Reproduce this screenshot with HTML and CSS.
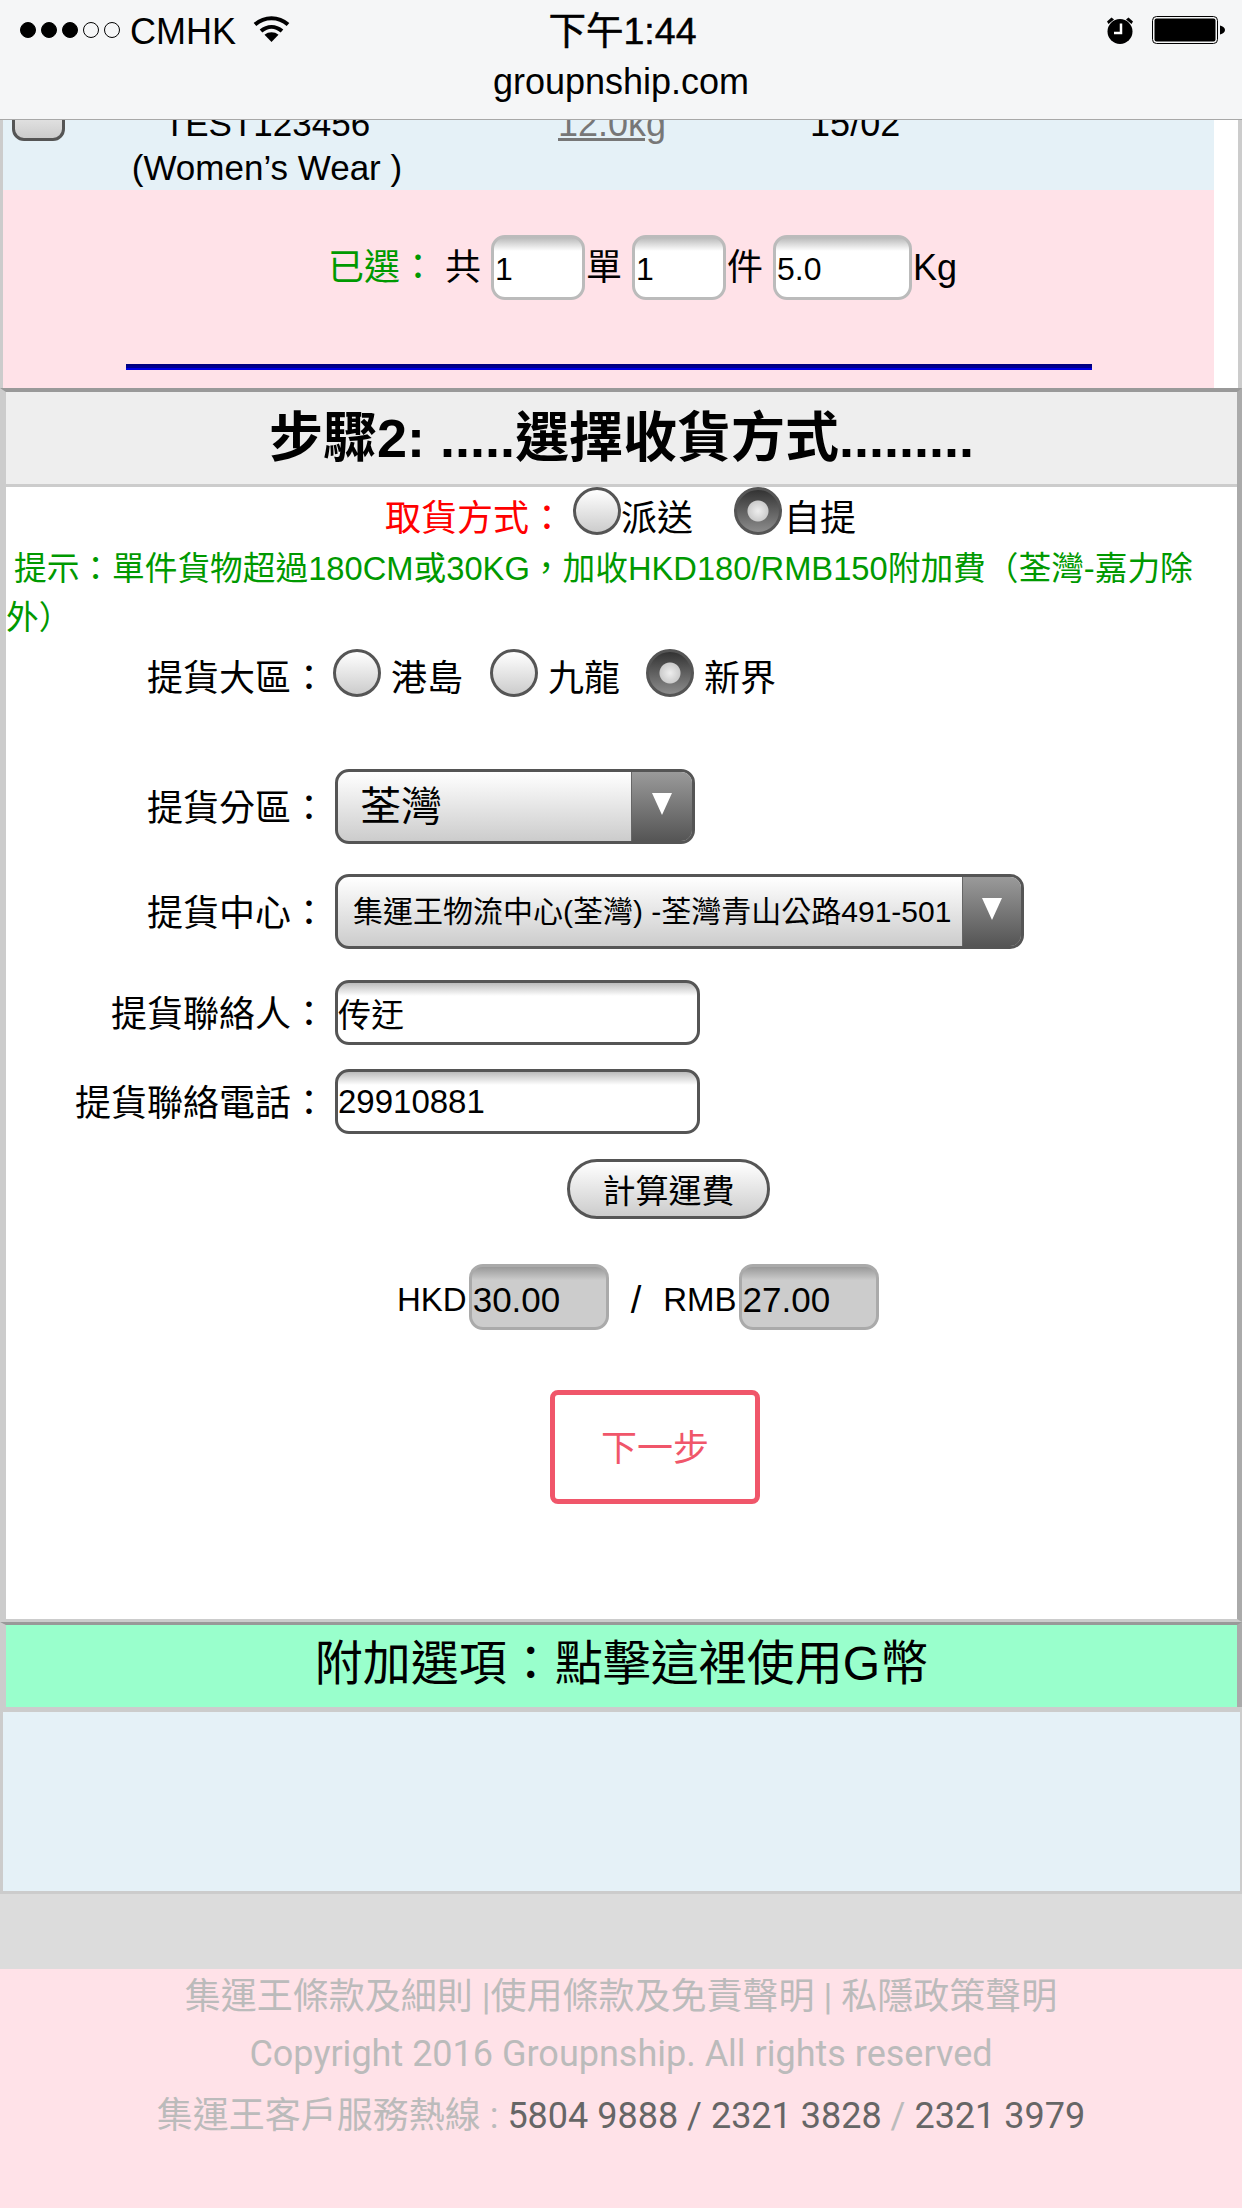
FILE: index.html
```html
<!DOCTYPE html>
<html lang="zh-Hant">
<head>
    <meta charset="UTF-8">
    <meta name="viewport" content="width=device-width, initial-scale=1.0">
    <title>groupnship.com</title>
    <link rel="stylesheet" href="styles.css">
</head>
<body>
    <header class="status-bar">
        <div class="status-row">
            <div class="status-left">
                <span class="signal">
                    <i class="dot on"></i><i class="dot on"></i><i class="dot on"></i><i class="dot"></i><i class="dot"></i>
                </span>
                <span class="carrier">CMHK</span>
                <svg class="wifi" width="37" height="27" viewBox="0 0 37 27">
                    <path d="M2 9.500C11.500 1 25.500 1 35 9.500" fill="none" stroke="#000" stroke-width="4"/>
                    <path d="M8 16C14.500 10.500 22.500 10.500 29 16" fill="none" stroke="#000" stroke-width="4"/>
                    <path d="M18.500 27L11.500 19.800C15.500 16.500 21.500 16.500 25.500 19.800Z"/>
                </svg>
            </div>
            <div class="clock">下午1:44</div>
            <div class="status-right">
                <svg class="alarm" width="28" height="28" viewBox="0 0 28 28">
                    <circle cx="14" cy="15.500" r="12.500"/>
                    <path d="M1 5.500L5.500 1.500L8 3.500L2.500 8ZM27 5.500L22.500 1.500L20 3.500L25.500 8Z"/>
                    <path d="M15 7.500V17H8" fill="none" stroke="#fff" stroke-width="2.500"/>
                </svg>
                <svg class="battery" width="73" height="28" viewBox="0 0 73 28">
                    <rect x="0.500" y="0.500" width="65" height="27" rx="4" fill="none" stroke="#000"/>
                    <rect x="2.500" y="2.500" width="61" height="23" rx="2"/>
                    <path d="M68 9.500C71 10 73 12 73 14C73 16 71 18 68 18.500Z"/>
                </svg>
            </div>
        </div>
        <div class="url">groupnship.com</div>
    </header>

    <section class="orders">
        <div class="order-row">
            <div class="col-check"><input class="checkbox" type="checkbox"></div>
            <div class="col-name">TEST123456<br>(Women’s Wear )</div>
            <a class="col-weight" href="#">12.0kg</a>
            <div class="col-date">15/02</div>
        </div>
        <div class="summary">
            <div class="summary-line">
                <span class="summary-title">已選：</span>
                <span>共</span>
                <input class="qty" type="text" value="1">
                <span>單</span>
                <input class="qty" type="text" value="1">
                <span>件</span>
                <input class="qty qty-wide" type="text" value="5.0">
                <span>Kg</span>
            </div>
            <hr class="summary-rule">
        </div>
    </section>

    <section class="step">
        <h2 class="step-title">步驟2: .....選擇收貨方式.........</h2>
        <div class="method">
            <span class="method-label">取貨方式：</span>
            <input class="radio" type="radio" name="method">
            <label class="method-text">派送</label>
            <input class="radio radio-next" type="radio" name="method" checked>
            <label class="method-text method-text-last">自提</label>
        </div>
        <p class="hint">提示：單件貨物超過180CM或30KG，加收HKD180/RMB150附加費（荃灣-嘉力除外）</p>

        <div class="field field-area">
            <label>提貨大區：</label>
            <div class="areas">
                <input class="radio" type="radio" name="area"><span>港島</span>
                <input class="radio" type="radio" name="area"><span>九龍</span>
                <input class="radio" type="radio" name="area" checked><span>新界</span>
            </div>
        </div>
        <div class="field field-district">
            <label>提貨分區：</label>
            <div class="select select-small">
                <select><option>荃灣</option></select>
                <span class="select-arrow"></span>
            </div>
        </div>
        <div class="field field-center">
            <label>提貨中心：</label>
            <div class="select select-large">
                <select><option>集運王物流中心(荃灣) -荃灣青山公路491-501</option></select>
                <span class="select-arrow"></span>
            </div>
        </div>
        <div class="field field-name">
            <label>提貨聯絡人：</label>
            <input class="text-input" type="text" value="传迂">
        </div>
        <div class="field field-phone">
            <label>提貨聯絡電話：</label>
            <input class="text-input" type="text" value="29910881">
        </div>

        <button class="calc-btn" type="button">計算運費</button>

        <div class="price">
            <span>HKD</span>
            <input class="price-box" type="text" value="30.00" readonly>
            <span class="price-slash">/</span>
            <span>RMB</span>
            <input class="price-box" type="text" value="27.00" readonly>
        </div>

        <button class="next-btn" type="button">下一步</button>
    </section>

    <div class="extra">附加選項：點擊這裡使用G幣</div>
    <div class="extra-body"></div>
    <div class="spacer"></div>

    <footer class="footer">
        <p class="footer-links">集運王條款及細則 |使用條款及免責聲明 | 私隱政策聲明</p>
        <p class="footer-copy">Copyright 2016 Groupnship. All rights reserved</p>
        <p class="footer-phone">集運王客戶服務熱線 : <b>5804 9888 / 2321 3828</b> / <b>2321 3979</b></p>
    </footer>
</body>
</html>
```

FILE: styles.css
```css
* {
    margin: 0;
    padding: 0;
    box-sizing: border-box;
}

body {
    width: 1242px;
    height: 2208px;
    overflow: hidden;
    background-color: #dcdcdc;
    color: #000;
    font-family: "Liberation Sans", "Noto Sans CJK TC", sans-serif;
    font-size: 36px;
}

input, select, button {
    font-family: inherit;
    color: #000;
    outline: none;
}

/* phone status bar + address */
.status-bar {
    position: relative;
    z-index: 2;
    height: 120px;
    padding-top: 12px;
    background-color: #f5f6f7;
    border-bottom: 1px solid #a8a8a8;
}

.status-row {
    display: grid;
    grid-template-columns: 1fr auto 1fr;
    align-items: center;
    height: 40px;
    padding: 0 17px 0 20px;
}

.status-left {
    display: flex;
    align-items: center;
}

.signal {
    display: flex;
    gap: 5px;
    margin-top: -4px;
}

.dot {
    width: 16px;
    height: 16px;
    border: 1px solid #000;
    border-radius: 50%;
}

.dot.on {
    background-color: #000;
}

.carrier {
    margin-left: 10px;
    line-height: 40px;
}

.wifi {
    margin: -8px 0 0 17px;
}

.clock {
    margin-top: -3px;
    font-size: 37.500px;
    line-height: 40px;
    -webkit-text-stroke: 0.5px #000;
}

.status-right {
    display: flex;
    align-items: center;
    justify-content: flex-end;
    margin-top: -4px;
}

.battery {
    margin-left: 18px;
}

.url {
    margin-top: 10px;
    line-height: 40px;
    text-align: center;
}

/* order list, cut by the bar */
.orders {
    padding-right: 24px;
    background-color: #fff;
    border-left: 3px solid #ccc;
    border-right: 4px solid #ccc;
}

.order-row {
    display: flex;
    height: 70px;
    overflow: hidden;
    background-color: #e5f1f7;
    line-height: 44px;
}

.col-check {
    width: 120px;
    padding-left: 9px;
}

.checkbox {
    display: block;
    appearance: none;
    width: 53px;
    height: 53px;
    margin-top: -32px;
    background: linear-gradient(#fff, #ccc);
    border: 3px solid #555;
    border-radius: 12px;
}

.col-name {
    width: 288px;
    margin-top: -18px;
    font-size: 35px;
    text-align: center;
}

.col-weight {
    height: 44px;
    margin: -18px 0 0 147px;
    color: #777;
}

.col-date {
    margin: -18px 0 0 144px;
}

.summary {
    height: 198px;
    padding-top: 45px;
    background-color: #ffe2e8;
    overflow: hidden;
}

.summary-line {
    display: flex;
    align-items: center;
    height: 65px;
    padding-left: 325px;
    line-height: 40px;
}

.summary-title {
    width: 117px;
    color: #090;
}

.qty {
    width: 94px;
    height: 65px;
    margin: 0 1px 0 10px;
    padding: 3px 1px 0;
    background: linear-gradient(#bbb, #fff 22%);
    border: 3px solid #bbb;
    border-radius: 14px;
    font-size: 32px;
}

.qty-wide {
    width: 139px;
}

.summary-rule {
    width: 966px;
    height: 6px;
    margin: 64px 0 0 123px;
    background-color: #000090;
    border: 0;
    border-top: 2px solid #000080;
    border-bottom: 2px solid #0000e0;
}

/* step 2 panel */
.step {
    height: 1234px;
    background-color: #fff;
    border-top: 4px solid #999;
    border-left: 6px solid #ccc;
    border-right: 5px solid #aaa;
    border-bottom: 3px solid #ccc;
}

.step-title {
    height: 95px;
    background-color: #eee;
    border-bottom: 3px solid #ccc;
    font-size: 54px;
    line-height: 92px;
    text-align: center;
}

.method {
    display: flex;
    justify-content: center;
    height: 48px;
    padding-right: 2px;
    line-height: 38px;
}

.method-label {
    margin-right: 8px;
    padding-top: 13px;
    color: #f00;
}

.method-text {
    padding-top: 13px;
}

.method-text-last {
    padding-left: 2px;
}

.radio {
    appearance: none;
    flex: none;
    width: 48px;
    height: 48px;
    background: linear-gradient(#fff, #ccc);
    border: 3px solid #555;
    border-radius: 50%;
}

.radio:checked {
    background: radial-gradient(circle, #eee 0, #ccc 10px, transparent 11px), linear-gradient(#333, #8c8c8c);
}

.radio-next {
    margin-left: 41px;
}

.hint {
    margin-top: 9px;
    padding-right: 25px;
    color: #090;
    font-size: 32.700px;
    line-height: 49px;
    text-indent: 8px;
}

.field {
    display: grid;
    grid-template-columns: 329px 1fr;
    align-items: center;
    line-height: 40px;
}

.field label {
    padding: 4px 8px 0 0;
    text-align: right;
}

.field-area {
    margin-top: 7px;
}

.field-area label {
    padding-top: 10px;
}

.field-district {
    margin-top: 70px;
}

.field-center {
    margin-top: 30px;
}

.field-name {
    margin-top: 31px;
}

.field-phone {
    margin-top: 24px;
}

.areas {
    display: flex;
    margin-left: -2px;
}

.areas span {
    width: 109px;
    padding: 10px 0 0 10px;
}

.areas span:nth-of-type(2) {
    width: 108px;
}

.select {
    display: flex;
    height: 75px;
    overflow: hidden;
    background: linear-gradient(#fff, #ccc);
    border: 3px solid #555;
    border-radius: 14px;
}

.select-small {
    width: 360px;
}

.select-large {
    width: 689px;
}

.select select {
    appearance: none;
    flex: 1;
    min-width: 0;
    padding-left: 15px;
    background: transparent;
    border: 0;
    border-right: 1px solid #666;
    font-size: 30px;
}

.select-small select {
    padding-left: 22px;
    font-size: 41px;
}

.select-arrow {
    display: flex;
    align-items: center;
    justify-content: center;
    width: 60px;
    padding-bottom: 6px;
    background: linear-gradient(#9a9a9a, #555);
}

.select-large .select-arrow {
    width: 58px;
}

.select-arrow::after {
    content: "";
    border-top: 22px solid #fff;
    border-left: 10px solid transparent;
    border-right: 10px solid transparent;
}

.text-input {
    width: 365px;
    height: 65px;
    padding: 0;
    background: linear-gradient(#bbb, #fff 22%);
    border: 3px solid #555;
    border-radius: 14px;
    font-size: 33px;
}

.calc-btn {
    display: block;
    width: 203px;
    height: 60px;
    margin: 25px 0 0 561px;
    background: linear-gradient(#fff, #ccc);
    border: 3px solid #555;
    border-radius: 30px;
    font-size: 33px;
}

.price {
    display: flex;
    align-items: center;
    height: 66px;
    margin-top: 45px;
    padding-left: 391px;
    font-size: 33px;
}

.price span {
    padding-top: 6px;
}

.price-box {
    width: 140px;
    height: 66px;
    margin-left: 2px;
    padding: 6px 1px 0;
    background: linear-gradient(#999, #ccc 22%);
    border: 3px solid #aaa;
    border-radius: 14px;
    font-size: 35px;
}

.price-slash {
    margin: 0 22px;
    font-size: 38px;
}

.next-btn {
    display: block;
    width: 210px;
    height: 114px;
    margin: 60px 0 0 544px;
    padding-bottom: 4px;
    background-color: #fff;
    border: 5px solid #f0566a;
    border-radius: 8px;
    color: #f0566a;
    font-size: 36px;
}

/* bottom bits */
.extra {
    height: 85px;
    background-color: #9fc;
    border-left: 6px solid #ccc;
    border-right: 5px solid #aaa;
    border-top: 3px solid #999;
    font-size: 48px;
    line-height: 78px;
    text-align: center;
}

.extra-body {
    height: 187px;
    background-color: #e5f1f7;
    border: 3px solid #ccc;
    border-top-width: 5px;
    border-right-width: 2px;
}

.spacer {
    height: 75px;
}

.footer {
    height: 239px;
    padding-top: 7px;
    background-color: #ffe2e8;
    color: #bbb;
    font-family: Roboto, "Noto Sans CJK TC", sans-serif;
    font-size: 36px;
    text-align: center;
}

.footer-links {
    line-height: 42px;
}

.footer-copy {
    margin-top: 15px;
    line-height: 42px;
}

.footer-phone {
    margin-top: 20px;
    line-height: 42px;
}

.footer-phone b {
    color: #666;
    font-weight: 400;
}
```
